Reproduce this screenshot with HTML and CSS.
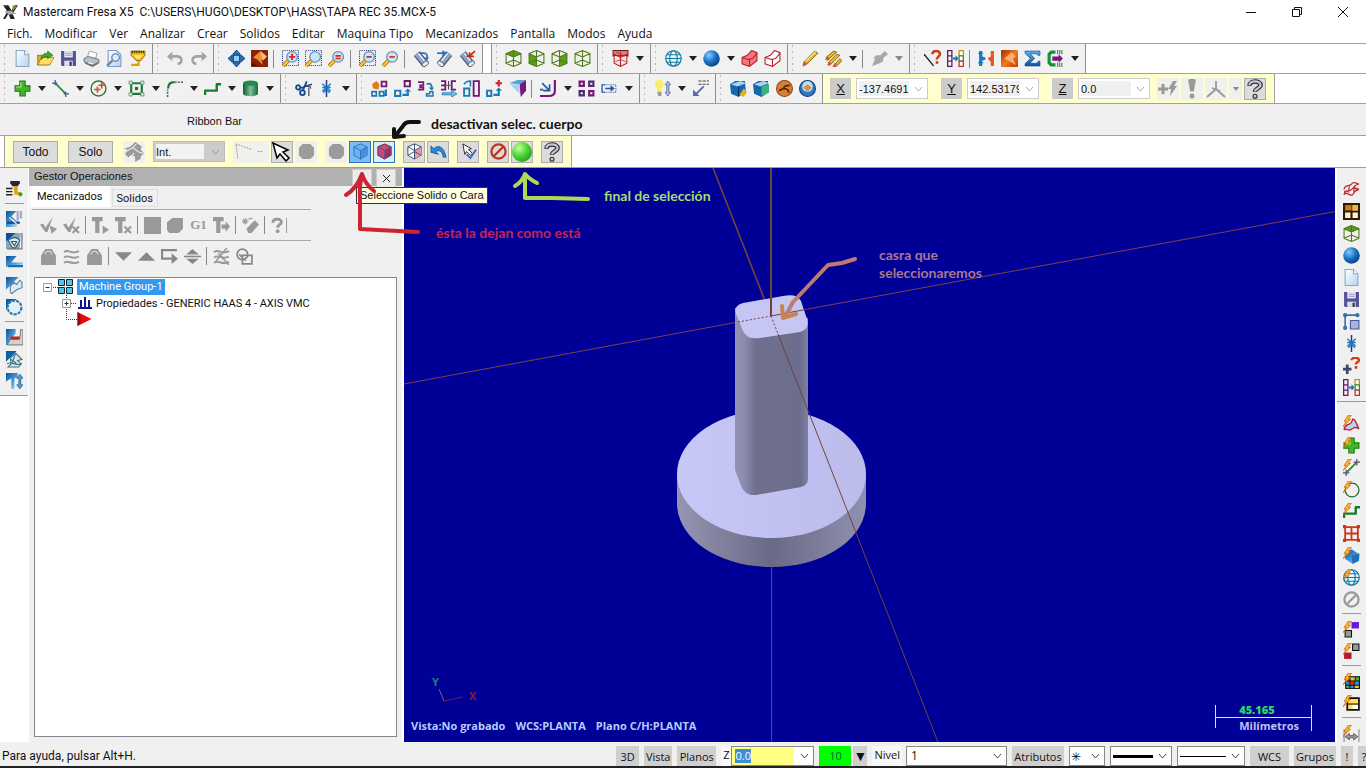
FILE: index.html
```html
<!DOCTYPE html>
<html lang="es">
<head>
<meta charset="utf-8">
<title>Mastercam Fresa X5</title>
<link rel="stylesheet" href="styles.css">
</head>
<body>
<svg class="sprite" aria-hidden="true">
<defs>
<linearGradient id="gBlue" x1="0" y1="0" x2="0" y2="1"><stop offset="0" stop-color="#5fb4ee"/><stop offset="1" stop-color="#0a55a8"/></linearGradient>
<linearGradient id="gPage" x1="0" y1="0" x2="1" y2="1"><stop offset="0" stop-color="#fff"/><stop offset="1" stop-color="#b4d2f2"/></linearGradient>
<radialGradient id="gBall" cx=".35" cy=".3" r=".8"><stop offset="0" stop-color="#8cc8f8"/><stop offset=".5" stop-color="#1b74c8"/><stop offset="1" stop-color="#08356f"/></radialGradient>
<radialGradient id="gGreen" cx=".35" cy=".3" r=".8"><stop offset="0" stop-color="#c8ff9c"/><stop offset=".5" stop-color="#4ed637"/><stop offset="1" stop-color="#1f9a1c"/></radialGradient>
<linearGradient id="gCyl"><stop offset="0" stop-color="#0a5a2c"/><stop offset=".5" stop-color="#7fc09a"/><stop offset="1" stop-color="#0d6c33"/></linearGradient>
<linearGradient id="gTile" x1="0" y1="0" x2="1" y2="1"><stop offset="0" stop-color="#0c4f96"/><stop offset=".6" stop-color="#4fa0d8"/><stop offset="1" stop-color="#cfe6f4"/></linearGradient>
<linearGradient id="gOrange" x1="0" y1="0" x2="1" y2="1"><stop offset="0" stop-color="#a02800"/><stop offset=".5" stop-color="#f07a20"/><stop offset="1" stop-color="#c63b00"/></linearGradient>
</defs>
<symbol id="logo" viewBox="0 0 16 16"><path d="M1 2h5l3 5 3-5h3l-5 8 2 5H8L6 10 3 15H1l4-7z" fill="#222"/><path d="M2 8l6-1 6 3-7 1z" fill="#aaa"/><path d="M10 2l4 1-4 5z" fill="#7b8a3a"/></symbol>
<symbol id="new" viewBox="0 0 16 16"><path d="M2 .5h8l4 4v11H2z" fill="url(#gPage)" stroke="#8aa4c4"/><path d="M10 .5v4h4" fill="#fff" stroke="#8aa4c4"/></symbol>
<symbol id="open" viewBox="0 0 16 16"><path d="M0 14V5h5l1 1h6v8z" fill="#e0a820" stroke="#8a6410" stroke-width=".7"/><path d="M1 14l3-7h12l-4 7z" fill="#ffe060" stroke="#a07810" stroke-width=".7"/><path d="M4 9c0-5 3-6 6-6V1l5 4-5 3V6C7 6 6 7 4 9z" fill="#3faa28" stroke="#1b6a10" stroke-width=".6"/></symbol>
<symbol id="save" viewBox="0 0 16 16"><path d="M1 1h14v14H2l-1-1z" fill="#54519a"/><path d="M4 1h8v6H4z" fill="#e8ecf8"/><path d="M5 3h6M5 5h6" stroke="#99a"/><path d="M4 10h8v5H4z" fill="#d8dcec"/><path d="M9 11h2v4H9z" fill="#333"/></symbol>
<symbol id="print" viewBox="0 0 16 16"><path d="M4 7l2-6 7 2-1 5z" fill="#fff" stroke="#888" stroke-width=".7"/><path d="M1 8l4-2 10 3v3l-5 3L1 11z" fill="#b9c2cc" stroke="#566" stroke-width=".8"/><path d="M2 11l7 3 5-3v2l-5 3-7-3z" fill="#6b7480"/><path d="M5 12l4 1" stroke="#fff"/></symbol>
<symbol id="preview" viewBox="0 0 16 16"><path d="M2 .5h8l4 4v11H2z" fill="url(#gPage)" stroke="#7a9ac0"/><circle cx="9" cy="7" r="3.5" fill="#d8ecff" stroke="#456a9a"/><path d="M6 10l-5 5" stroke="#6b88a8" stroke-width="2.2"/></symbol>
<symbol id="holder" viewBox="0 0 16 16"><path d="M2 1h13v4l-4 5H7L2 5z" fill="#f8c010" stroke="#6a4800" stroke-width=".7"/><path d="M3 2h12" stroke="#332800" stroke-dasharray="1 1" stroke-width="2"/><path d="M4 5l3 3h3l3-3z" fill="#ffe880"/><path d="M9 10v4H2" stroke="#e0a000" fill="none" stroke-width="2"/></symbol>
<symbol id="undo" viewBox="0 0 16 16"><path d="M3 6h6c6 0 6 7 1 7" fill="none" stroke="#a3a3a3" stroke-width="2.4"/><path d="M0 6l5-4.500v9z" fill="#a3a3a3"/></symbol>
<symbol id="redo" viewBox="0 0 16 16"><path d="M13 6H7c-6 0-6 7-1 7" fill="none" stroke="#a3a3a3" stroke-width="2.400"/><path d="M16 6l-5-4.500v9z" fill="#a3a3a3"/></symbol>
<symbol id="fit" viewBox="0 0 16 16"><path d="M8 0l3.500 4h-7zM8 16l3.500-4h-7zM0 8l4-3.500v7zM16 8l-4-3.500v7z" fill="#1a78d0" stroke="#083a78" stroke-width=".8"/><path d="M5 5h6v6H5z" fill="#8cd0ff" stroke="#083a78"/></symbol>
<symbol id="repaint" viewBox="0 0 16 16"><path d="M0 0h16v16H0z" fill="#8a2208"/><path d="M2 7l7-6 5 7-4 1 1 5-5-5z" fill="#f58a34"/><path d="M9 1l6 5-4 4z" fill="#ffc07a"/><path d="M1 12l5 3H1z" fill="#401000"/></symbol>
<symbol id="mag" viewBox="0 0 16 16"><path d="M6.500 9.500L1 15" stroke="#a86a00" stroke-width="3.500"/><path d="M6 10l-5 5" stroke="#ffc83a" stroke-width="2"/><circle cx="9.500" cy="6.500" r="5" fill="#c8e6fa" stroke="#6a8cae" stroke-width="1.200"/></symbol>
<symbol id="dots" viewBox="0 0 16 16"><path d="M.5.500h15v14H.5z" fill="none" stroke="#2a3f8c" stroke-dasharray="1 1"/></symbol>
<symbol id="zwin" viewBox="0 0 16 16"><use href="#dots"/><use href="#mag"/><path d="M9.500 3.500v6M6.500 6.500h6" stroke="#e02818" stroke-width="1.800"/></symbol>
<symbol id="ztar" viewBox="0 0 16 16"><use href="#dots"/><use href="#mag"/></symbol>
<symbol id="zin" viewBox="0 0 16 16"><use href="#mag"/><path d="M7 5.500h5M7 8h5" stroke="#d02818" stroke-width="1.600"/></symbol>
<symbol id="zprev" viewBox="0 0 16 16"><use href="#dots"/><use href="#mag"/><path d="M7 6.500h5" stroke="#c03020" stroke-width="1.600"/></symbol>
<symbol id="zout" viewBox="0 0 16 16"><use href="#mag"/><path d="M7 6.500h5" stroke="#e02818" stroke-width="1.600"/></symbol>
<symbol id="tube" viewBox="0 0 16 16"><path d="M3.500 3.500l7.500 9" stroke="#3d4d6a" stroke-width="7"/><path d="M3.500 3.500l7.500 9" stroke="#8fa3c4" stroke-width="5"/><path d="M5 3l7 9" stroke="#dbe6f4" stroke-width="1.500"/><ellipse cx="11.500" cy="13" rx="3.500" ry="2" transform="rotate(-38 11.500 13)" fill="#e8eef6" stroke="#3d4d6a" stroke-width=".8"/></symbol>
<symbol id="dyn" viewBox="0 0 16 16"><use href="#tube"/><path d="M6 3h4c3 0 4 2 3 5" fill="none" stroke="#2a6fc0" stroke-width="1.600"/><path d="M11 7h4l-2 3z" fill="#2a6fc0"/></symbol>
<symbol id="dyn2" viewBox="0 0 16 16"><use href="#tube" transform="matrix(-1 0 0 1 16 0)"/><path d="M1 3h7" stroke="#2a6fc0" stroke-width="1.600"/><path d="M6 0l4 3-4 3z" fill="#2a6fc0"/></symbol>
<symbol id="dyn3" viewBox="0 0 16 16"><use href="#tube"/><path d="M7 6c3 0 5-2 8-5M10 2v4h4" fill="none" stroke="#d02818" stroke-width="1.600"/></symbol>
<symbol id="cube" viewBox="0 0 16 16"><path d="M8 .5l7 3v9l-7 3-7-3v-9zM1 3.500l7 3 7-3M8 6.500v9M8 .5v7M1 12.500l7-3 7 3" fill="none" stroke="currentColor"/></symbol>
<symbol id="ctop" viewBox="0 0 16 16"><path d="M8 .5l7 3-7 3-7-3z" fill="#5f9c1c"/><use href="#cube"/></symbol>
<symbol id="cfront" viewBox="0 0 16 16"><path d="M1 3.500l7 3v9l-7-3z" fill="#5f9c1c"/><use href="#cube"/></symbol>
<symbol id="cright" viewBox="0 0 16 16"><path d="M15 3.500l-7 3v9l7-3z" fill="#5f9c1c"/><use href="#cube"/></symbol>
<symbol id="cplane" viewBox="0 0 16 16"><path d="M1 .5h14v5H1z" fill="#e87878" stroke="#602020"/><path d="M2 4l6 3 6-3v8.500l-6 3-6-3zM8 7v8" fill="#fce4e4" stroke="#b02028"/><path d="M8 1v6M4 2l8 4M3 11l5-2 5 2" fill="none" stroke="#b02028" stroke-width=".7"/></symbol>
<symbol id="globe" viewBox="0 0 16 16"><g fill="none" stroke="#1878a0" stroke-width="1.100"><circle cx="8" cy="8" r="7.300" fill="#e4f4fa"/><ellipse cx="8" cy="8" rx="3.500" ry="7.300"/><path d="M.7 8h14.600M2 4.500h12M2 11.500h12"/></g></symbol>
<symbol id="ball" viewBox="0 0 16 16"><circle cx="8" cy="8" r="7.800" fill="url(#gBall)"/></symbol>
<symbol id="block" viewBox="0 0 16 16"><path d="M1 7l5-2 4-4.500 5 2V10l-7 5.500-7-2.500z" fill="var(--f,#f4787c)" stroke="#b81c24"/><path d="M1 7l6 2 4-1 4-5M8 9v6" fill="none" stroke="#b81c24"/></symbol>
<symbol id="pencil" viewBox="0 0 16 16"><path d="M1 15l1-4L12 1l3 2L5 13z" fill="#e8b820" stroke="#7a5a08" stroke-width=".8"/><path d="M1 15l1-4 3 2z" fill="#e05038"/><path d="M3.500 10.500L13 1.500" stroke="#fff09a"/></symbol>
<symbol id="pencils" viewBox="0 0 16 16"><path d="M1 7l7-6 3 1-8 7zM3 12l8-8 3 1-9 9zM8 15l6-7 2 2-6 6z" fill="#e8b820" stroke="#7a5a08" stroke-width=".8"/><path d="M0 9l2-3 3 2-2 2zM2 14l2-3 2 2-2 2zM7 16l2-4 2 2-2 2z" fill="#e05038"/></symbol>
<symbol id="gbrush" viewBox="0 0 16 16"><path d="M1 15l3-7H2l3-3h4l4-4 3 3-4 3-1 4-4 2z" fill="#a8a8a8"/></symbol>
<symbol id="ask" viewBox="0 0 16 16"><path d="M0 4l9 11" stroke="#222" stroke-width="1.300"/><path d="M8 4c0-4 7-4 7 0 0 2-3 2.500-3 5" fill="none" stroke="#d03c10" stroke-width="2.400"/><path d="M11 10.500h2.500v2.500H11z" fill="#d03c10"/></symbol>
<symbol id="match" viewBox="0 0 16 16"><path d="M.6.600h4v14.800h-4zM.6 5.500h4M.6 10.500h4" fill="none" stroke="#68186a" stroke-width="1.200"/><path d="M11.400.600h4v5h-4z" fill="#fff" stroke="#d09010" stroke-width="1.200"/><path d="M11.400 5.500h4v5h-4z" fill="#fff" stroke="#38902c" stroke-width="1.200"/><path d="M11.400 10.500h4v5h-4z" fill="#fff" stroke="#c0302c" stroke-width="1.200"/><path d="M5.500 8h3" stroke="#1878c8" stroke-width="2"/><path d="M8 5l3 3-3 3z" fill="#1878c8"/></symbol>
<symbol id="merge" viewBox="0 0 16 16"><path d="M1 1h3v5l3 1v2l-3 1v5H1z" fill="#1878c8"/><path d="M15 1h-3v5L9 8l3 3v4h3z" fill="#e85420"/><path d="M0 3h5M0 12h5" stroke="#1878c8"/></symbol>
<symbol id="osq" viewBox="0 0 16 16"><rect width="16" height="16" rx="1" fill="url(#gOrange)"/><path d="M3 8l7-6 4 4-3 2 3 6-5-3z" fill="#ffb070"/></symbol>
<symbol id="sigma" viewBox="0 0 16 16"><path d="M1 1h14v4h-2L12 3.500H6L10 8l-4.500 4.500H12l1.500-2H15V15H1v-2l5-5-5-5z" fill="url(#gBlue)" stroke="#0a4484" stroke-width=".6"/></symbol>
<symbol id="cgreen" viewBox="0 0 16 16"><path d="M8 2H4L2 4v8l2 2h4" fill="none" stroke="#16923a" stroke-width="3"/><path d="M10 0v4M12 0v4M14 0v4M10 12v4M12 12v4M14 12v4" stroke="#16923a"/><path d="M5 6h6V4l4 4-4 4v-2H5z" fill="#781878"/></symbol>
<symbol id="plus" viewBox="0 0 16 16"><path d="M5.500 1h5v4.500H15v5h-4.500V15h-5v-4.500H1v-5h4.500z" fill="#44b428" stroke="#1b7a12"/><path d="M6.500 2v4.500H2" stroke="#b0ee90" fill="none"/></symbol>
<symbol id="line" viewBox="0 0 16 16"><path d="M3 3l10 10" stroke="#1f8c34" stroke-width="1.500"/><path d="M0 3h5M3 0v5M11 13h5M13 11v5" stroke="#5050a0" stroke-width="1.200"/></symbol>
<symbol id="circ" viewBox="0 0 16 16"><circle cx="8" cy="8" r="7" fill="none" stroke="#2a7a30" stroke-width="1.300"/><path d="M7 6v6M4 9h6M11 2v6M8 5h6" stroke="#e04820" stroke-width="1.500"/></symbol>
<symbol id="rect" viewBox="0 0 16 16"><path d="M3 3h10v10H3z" fill="none" stroke="#187a30" stroke-width="2"/><path d="M1 1h3v3H1zM12 1h3v3h-3zM1 12h3v3H1zM12 12h3v3h-3z" fill="#e4f0e4" stroke="#5c8c68" stroke-width=".8"/><path d="M6.500 6.500h3v3h-3z" fill="#187a30"/></symbol>
<symbol id="fillet" viewBox="0 0 16 16"><path d="M1.500 16V9" stroke="#4858a0" stroke-width="1.500" stroke-dasharray="2 1"/><path d="M2 8c0-4 2-6 6-6" stroke="#187a30" fill="none" stroke-width="2"/><path d="M8 2h8" stroke="#4a4a4a" stroke-width="1.300" stroke-dasharray="2 1"/></symbol>
<symbol id="spline" viewBox="0 0 16 16"><path d="M1 14v-4h11V4h4" stroke="#187a30" stroke-linejoin="round" fill="none" stroke-width="2.200"/></symbol>
<symbol id="cyl" viewBox="0 0 16 16"><path d="M1 3v10c0 3 14 3 14 0V3z" fill="url(#gCyl)"/><ellipse cx="8" cy="3" rx="7" ry="2.500" fill="#1c8c48"/></symbol>
<symbol id="trim" viewBox="0 0 16 16"><path d="M8 9l3-8M9 6h5l1 2M13 7v8" stroke="#667" fill="none" stroke-width="1.400"/><circle cx="3" cy="7" r="2" fill="none" stroke="#144c90" stroke-width="1.800"/><circle cx="7" cy="12" r="2.200" fill="none" stroke="#144c90" stroke-width="1.800"/><path d="M4 8l12-4M7 10l4-8" stroke="#144c90" stroke-width="1.500"/></symbol>
<symbol id="star" viewBox="0 0 16 16"><path d="M8 0v16" stroke="#223a88" stroke-width="1.400"/><path d="M4 3.500l8 7M12 3.500l-8 7M4 7h8M5 12l3-3 3 3" fill="none" stroke="#1878c0" stroke-width="1.300"/></symbol>
<symbol id="x1" viewBox="0 0 16 16"><path d="M1 11h4v4H1zM8 11h4v4H8z" fill="none" stroke="#1878b8" stroke-width="1.600"/><path d="M10 1.500h4.500V6H10z" fill="none" stroke="#701870" stroke-width="1.700"/><path d="M1 4l4-3 3 3-1 5-5-1z" fill="#e87820"/><path d="M12 14h2V9" stroke="#1878b8" stroke-width="2" fill="none"/></symbol>
<symbol id="x2" viewBox="0 0 16 16"><path d="M1 10h5v5H1z" fill="none" stroke="#1878b8" stroke-width="1.800"/><path d="M10 1h5v5h-5z" fill="none" stroke="#701870" stroke-width="1.800"/><path d="M8 14h5v-3" fill="none" stroke="#1878b8" stroke-width="2"/><path d="M10 11l3-3 3 3z" fill="#1878b8"/></symbol>
<symbol id="x3" viewBox="0 0 16 16"><path d="M1 2h5v3H3v2h3v2H1" fill="none" stroke="#701870" stroke-width="1.600"/><path d="M9 4c4-2 5 1 5 4" fill="none" stroke="#1878b8" stroke-width="1.600"/><path d="M9 15h6v-4h-3v2H9z" fill="none" stroke="#1878b8" stroke-width="1.400"/><path d="M11 7h5l-2 3z" fill="#1878b8"/></symbol>
<symbol id="x4" viewBox="0 0 16 16"><path d="M1 1h4v8H1M1 5h4M15 1h-4v8h4" fill="none" stroke="#701870" stroke-width="1.700"/><path d="M8 1v8M6 5h4" stroke="#445" stroke-width="1"/><path d="M2 12h9v-2l5 3-5 3v-2H2z" fill="#78b8e4" stroke="#1878b8" stroke-width=".7"/></symbol>
<symbol id="x5" viewBox="0 0 16 16"><path d="M10 1h5v14h-5z" fill="none" stroke="#701870" stroke-width="1.700"/><path d="M1 8h5v7H1z" fill="none" stroke="#1878b8" stroke-width="1.700"/><path d="M1 4c2-3 4-3 6-3v5" fill="none" stroke="#1878b8" stroke-width="1.500"/></symbol>
<symbol id="x6" viewBox="0 0 16 16"><path d="M1 10h4v5H1z" fill="none" stroke="#1878b8" stroke-width="1.800"/><path d="M12 0v6M9 3h6" stroke="#d02020" stroke-width="2"/><path d="M7 14h5V9" fill="none" stroke="#1878b8" stroke-width="2"/><path d="M9 10l3-3 3 3z" fill="#1878b8"/></symbol>
<symbol id="x7" viewBox="0 0 16 16"><path d="M0 3l8-3h8l-6 4z" fill="#5aa0dc"/><path d="M10 4l6-4v10l-5 6z" fill="#781878"/><path d="M1 4h9v9z" fill="#a8cef0"/></symbol>
<symbol id="off" viewBox="0 0 16 16"><path d="M14 0v10c0 4-3 5-6 5H0" fill="none" stroke="#781878" stroke-width="2"/><path d="M0 9h3M2 3l6 6M9 4v6H3" fill="none" stroke="#2858a0" stroke-width="1.600"/></symbol>
<symbol id="grid4" viewBox="0 0 16 16"><path d="M1.500 1.500h4v4h-4zM10.500 10.500h4v4h-4z" fill="none" stroke="#781878" stroke-width="2"/><path d="M10.500 1.500h4v4h-4zM1.500 10.500h4v4h-4z" fill="none" stroke="#502878" stroke-width="2"/></symbol>
<symbol id="stretch" viewBox="0 0 16 16"><path d="M1 4.500h13v7H1z" fill="none" stroke="#2858a0" stroke-dasharray="1 1"/><path d="M4 4.500H1v7h3" fill="none" stroke="#2858a0"/><path d="M4 8h7" stroke="#2858a0" stroke-width="1.500"/><path d="M9 5l4 3-4 3z" fill="#2858a0"/></symbol>
<symbol id="bulb" viewBox="0 0 16 16"><path d="M5 0c5 0 5 6 2 8v3H3V8C0 6 0 0 5 0z" fill="#f8f060"/><path d="M3 11h4v4H4z" fill="#999"/><path d="M13 1l2.500 3.500H14v7h1.500L13 15l-2.500-3.500H12v-7h-1.500z" fill="#b8c0e0" stroke="#505890" stroke-width=".7"/></symbol>
<symbol id="note" viewBox="0 0 16 16"><path d="M6 1h10M6 4h10" stroke="#444" stroke-dasharray="3 1"/><path d="M11 6l-7 7" stroke="#5868a8" stroke-width="1.800"/><path d="M1 15V9l6 6z" fill="#5868a8"/></symbol>
<symbol id="bx1" viewBox="0 0 16 16"><path d="M0 4l5-3h9l1 10-7 5-7-3z" fill="#1468b0"/><path d="M1 4l6 2 8-3-5-2z" fill="#a8d4f4"/><path d="M8 6v9" stroke="#082c58"/><path d="M9 14l4-6 3 3-3 5z" fill="#e8b020"/></symbol>
<symbol id="bx2" viewBox="0 0 16 16"><path d="M0 4l5-3h9l1 10-7 5-7-3z" fill="#1468b0"/><path d="M1 4l6 2 8-3-5-2z" fill="#a8d4f4"/><path d="M8 6l7-2v8l-7 3z" fill="#3cb47c"/></symbol>
<symbol id="rnd1" viewBox="0 0 16 16"><circle cx="8" cy="8" r="7.500" fill="#d88030" stroke="#884818"/><path d="M3 10l4-2c1-3 3-3 6-3M12 12c0-3-2-4-5-4" fill="none" stroke="#4a2408" stroke-width="1.600"/></symbol>
<symbol id="rnd2" viewBox="0 0 16 16"><circle cx="8" cy="8" r="7.500" fill="#2c78c8" stroke="#183c78"/><circle cx="8" cy="6" r="5" fill="#c4dcf0"/><path d="M4 7l4-3 4 3-4 4z" fill="#d89048"/></symbol>
<symbol id="fast" viewBox="0 0 20 16"><path d="M5 3v10M0 8h10" stroke="#999" stroke-width="3"/><path d="M15 0h4l-3 5h3l-7 10 1-7h-3z" fill="#999"/></symbol>
<symbol id="bang" viewBox="0 0 16 16"><path d="M5 1c1-2 5-2 6 0l-1.500 9h-3z" fill="#999"/><circle cx="8" cy="13.500" r="2" fill="#999"/></symbol>
<symbol id="axes" viewBox="0 0 20 16"><path d="M10 0v8M10 8l-9 8M10 8l9 8M6 7l8 3" stroke="#999" stroke-width="1.800" fill="none"/></symbol>
<symbol id="help" viewBox="0 0 18 18"><path d="M4 6C4 1 14 1 14 5.500c0 3-5 3-5 6" fill="none" stroke="#2c2c34" stroke-width="4"/><path d="M4 5.500C4 1 14 1 14 5.500c0 3-5 3-5 5.500" fill="none" stroke="#c4c8d4" stroke-width="2"/><circle cx="9" cy="15.500" r="1.800" fill="#c4c8d4" stroke="#2c2c34"/></symbol>
<symbol id="gcubes" viewBox="0 0 18 18"><path d="M0 6l6-2 4-4 6 4-1 3 3 3-3 3v2l-5 3 0-5-4-1-2 2-3-3 2-4z" fill="#9a9a9a"/><path d="M1 9l7-4 5 4 4 1M5 15l4-5M11 2l-4 4" stroke="#eee" fill="none"/></symbol>
<symbol id="cursor" viewBox="0 0 20 20"><path d="M1 1l4 15 3-4 6 7 3-3-6-6 5-2z" fill="#fff" stroke="#000" stroke-width="1.500"/></symbol>
<symbol id="ghex" viewBox="0 0 18 18"><path d="M5 1h8l4 4v8l-4 4H5l-4-4V5z" fill="#9c9c9c"/></symbol>
<symbol id="bcube" viewBox="0 0 18 18"><path d="M9 1l7 3v9l-7 4-7-4V4z" fill="#6ab4f4" stroke="#2a70c0"/><path d="M9 8l7-4v9l-7 4z" fill="#4490dc"/><path d="M2 4l7 4 7-4M9 8v9" fill="none" stroke="#2a70c0"/></symbol>
<symbol id="rcube" viewBox="0 0 18 18"><path d="M9 1l7 3v9l-7 4-7-4V4z" fill="#c84878" stroke="#44304c"/><path d="M9 8l7-4v9l-7 4z" fill="#983058"/><path d="M2 4l7 4 7-4M9 8v9" fill="none" stroke="#7a4a8c"/></symbol>
<symbol id="wcube" viewBox="0 0 18 18"><path d="M9 1l7 3v9l-7 4-7-4V4z" fill="#fff" stroke="#3a4a70"/><path d="M9 8l7-4v9l-7 4z" fill="#e898a8"/><path d="M2 4l7 4 7-4M9 1v16M2 13l7-4 7 4" fill="none" stroke="#3a4a70"/></symbol>
<symbol id="prev" viewBox="0 0 18 18"><path d="M1 10V3l3 3c5-5 11-2 13 9l-3 0c-1-6-4-8-8-6l3 3z" fill="#2888d8" stroke="#104888" stroke-width=".7"/></symbol>
<symbol id="vcheck" viewBox="0 0 18 18"><path d="M3 1l2 11 2-3 4 4 2-2-4-4 3-1z" fill="#fff" stroke="#222"/><path d="M7 12l4 4 6-9" fill="none" stroke="#4868c0" stroke-width="2"/></symbol>
<symbol id="stop" viewBox="0 0 18 18"><circle cx="9" cy="9" r="7.500" fill="none" stroke="currentColor" stroke-width="2.400"/><path d="M4 14L14 4" stroke="currentColor" stroke-width="2.400"/></symbol>
<symbol id="ok" viewBox="0 0 18 18"><circle cx="9" cy="9" r="9" fill="url(#gGreen)"/></symbol>
<symbol id="vert" viewBox="0 0 34 18"><path d="M3 16L1 1l17 6M24 9h6" fill="none" stroke="#999" stroke-dasharray="2 1"/></symbol>
<symbol id="mill" viewBox="0 0 16 16"><path d="M4 0h9v2l-2 3H6L4 2z" fill="#2a2438"/><path d="M7 5h4v5l3 1v2H8z" fill="#e8a010"/><path d="M0 7h6M0 10h6M0 13h6" stroke="#222" stroke-width="1.400"/><circle cx="13.500" cy="12.500" r="2" fill="#4a9c20"/></symbol>
<symbol id="m1" viewBox="0 0 16 16"><path d="M0 0h10L5 5l6 5-1 5H0z" fill="url(#gTile)"/><path d="M10 0h2v9h-2zM13 0h2v7h-2z" fill="#a8a0cc"/><path d="M1 11h12" stroke="#0a4480" stroke-width="2"/><path d="M3 6l7 6" stroke="#fff"/></symbol>
<symbol id="m2" viewBox="0 0 16 16"><path d="M0 0h13v15H0z" fill="#86a8bc"/><path d="M0 0h9L0 8z" fill="#0c4f96"/><path d="M2 7c4-4 9-3 11 0l-4 7H6zM5 8h5l-2 4z" fill="#dce8ee" stroke="#385870"/><path d="M13 0h3v6l-2 1z" fill="#a0a0b8"/><path d="M1 15h14V6" stroke="#667" fill="none"/></symbol>
<symbol id="m3" viewBox="0 0 16 16"><path d="M0 1h10L5 7h11v4H0z" fill="url(#gTile)"/><path d="M2 10.500h14" stroke="#1c69a8" stroke-width="2"/></symbol>
<symbol id="m4" viewBox="0 0 16 16"><path d="M0 0h12L0 12z" fill="url(#gTile)"/><path d="M4 9l3-4 3 2 3-4 2 2v5l-5 2-5 4-1-3z" fill="#dceaf4" stroke="#5080a8"/></symbol>
<symbol id="m5" viewBox="0 0 16 16"><path d="M0 0h10L0 10z" fill="#0c5fa6"/><circle cx="8" cy="8" r="6.500" fill="#e4f0f8" stroke="#2c78b0" stroke-width="2" stroke-dasharray="3 1"/></symbol>
<symbol id="m6" viewBox="0 0 16 16"><path d="M0 0h9v4L3 12v3H0z" fill="url(#gTile)"/><path d="M5 8h8l1-8 2 1v14H1z" fill="#cfd0d4" stroke="#666" stroke-width=".8"/><path d="M5 7h8v3H4z" fill="#c82018"/></symbol>
<symbol id="m7" viewBox="0 0 16 16"><path d="M0 0h10L0 10z" fill="#0c5fa6"/><path d="M4 7l5-5 6 6-4 1 3 3-2 3H2l3-3z" fill="#d8e4ea" stroke="#3c7080"/><path d="M1 12c4-3 9 3 14 0M5 8l5 4M9 2l-3 9" fill="none" stroke="#3c7080"/></symbol>
<symbol id="m8" viewBox="0 0 16 16"><path d="M0 0h11v4L8 5v10H5V5L0 8z" fill="url(#gTile)"/><path d="M13 1l3 4h-2v6h2l-3 4-3-4h2V5h-2z" fill="#48a0d0" stroke="#1c5c90" stroke-width=".6"/></symbol>
<symbol id="r1" viewBox="0 0 16 16"><path d="M1 8c1-6 5-2 7-5s4-1 7 0c-4 0-4 3-6 4M1 13c1-6 5-2 7-5s4-1 7 0c-4 0-4 3-6 5S3 9 1 13M1 10l4-1M6 5l-1 6M11 4l-1 6" fill="none" stroke="#c02c34" stroke-width="1.200"/></symbol>
<symbol id="r2" viewBox="0 0 16 16"><path d="M0 0h16v16H0z" fill="#2a1c08"/><path d="M9 2h5v5H9zM9 9h5v5H9zM2 9h5v5H2z" fill="#fff4c0"/><path d="M2 2h6v5H2z" fill="#d87810"/><path d="M9 2h5v5H9z" fill="#f0b830"/></symbol>
<symbol id="r3" viewBox="0 0 16 16"><path d="M2 2h11M2 2v12" stroke="#3870a8" stroke-width="1.500" fill="none"/><circle cx="2" cy="2" r="2" fill="#3870a8"/><circle cx="13.500" cy="2" r="2" fill="#3870a8"/><circle cx="2" cy="14" r="2" fill="#3870a8"/><path d="M7 7h8v8H7z" fill="#a8b4d8" stroke="#4858a0"/></symbol>
<symbol id="r4" viewBox="0 0 16 16"><path d="M4 7v9M0 11.500h8" stroke="#446" stroke-width="2.600"/><path d="M8 3c0-3 7-3 7 0 0 2-3 2-3 4" fill="none" stroke="#d03c10" stroke-width="2.200"/><path d="M11 8.500h2.500V11H11z" fill="#d03c10"/></symbol>
<symbol id="bolt" viewBox="0 0 16 16"><path d="M5 0L1 6h2L0 11l7-7H5l3-4z" fill="#ffb820" stroke="#c85010" stroke-width=".6"/></symbol>
<symbol id="q1" viewBox="0 0 16 16"><path d="M1 14c1-8 7-2 8-10 3-1 3 4 6 9-4-3-6 0-8 1s-4-2-6 0" fill="#b8d4ec" stroke="#c02c34" stroke-width="1.400"/><use href="#bolt"/></symbol>
<symbol id="q2" viewBox="0 0 16 16"><use href="#plus"/><use href="#bolt"/></symbol>
<symbol id="q3" viewBox="0 0 16 16"><path d="M3 13L13 3" stroke="#1f8c34" stroke-width="1.600"/><path d="M0 13h6M3 10v6M10 3h6M13 0v6" stroke="#556" stroke-width="1.200"/><use href="#bolt"/></symbol>
<symbol id="q4" viewBox="0 0 16 16"><circle cx="8.500" cy="8.500" r="6.500" fill="none" stroke="#226c2c" stroke-width="1.200"/><use href="#bolt"/></symbol>
<symbol id="q5" viewBox="0 0 16 16"><use href="#spline"/><use href="#bolt"/></symbol>
<symbol id="q6" viewBox="0 0 16 16"><path d="M2 2h12v12H2zM8 2v12M2 8h12" fill="none" stroke="#c8381c" stroke-width="1.700"/><path d="M0 0h3v3H0zM13 0h3v3h-3zM0 13h3v3H0zM13 13h3v3h-3z" fill="#c8381c"/></symbol>
<symbol id="q7" viewBox="0 0 16 16"><path d="M2 6l6-4 8 5-1 6-6 3-7-5z" fill="url(#gTile)"/><path d="M8 8l7-2v7l-6 3z" fill="#1c70bc"/><use href="#bolt"/></symbol>
<symbol id="q8" viewBox="0 0 16 16"><use href="#globe"/><use href="#bolt"/></symbol>
<symbol id="s1" viewBox="0 0 16 16"><path d="M8 1h7v6H8z" fill="#6a18d8"/><path d="M2 9h6v6H2z" fill="#999" stroke="#111"/><use href="#bolt"/></symbol>
<symbol id="s2" viewBox="0 0 16 16"><path d="M9 1h6v6H9z" fill="#999" stroke="#111"/><path d="M1 9h7v6H1z" fill="#b81830"/><use href="#bolt"/></symbol>
<symbol id="s3" viewBox="0 0 16 16"><path d="M2 3h14v12H2z" fill="#111"/><path d="M3 4h3v3H3zM7 8h3v3H7z" fill="#e03020"/><path d="M7 4h4v3H7zM11 12h4v2h-4z" fill="#f0c020"/><path d="M12 4h3v3h-3zM3 12h3v2H3z" fill="#38b848"/><path d="M3 8h3v3H3zM11 8h4v3h-4zM7 12h3v2H7z" fill="#3088e0"/><use href="#bolt"/></symbol>
<symbol id="s4" viewBox="0 0 16 16"><path d="M4 3h11v11H4z" fill="#ffe060" stroke="#111" stroke-width="1.600"/><path d="M9 9h5v4H9z" fill="#fff"/><path d="M4 8.500h11" stroke="#111"/><use href="#bolt"/></symbol>
<symbol id="s5" viewBox="0 0 16 16"><path d="M1 4v12M15 4v12" stroke="#888"/><path d="M2 11l4-3v2h4V8l4 3-4 3v-2H6v2z" fill="#999" stroke="#444" stroke-width=".7"/><use href="#bolt"/></symbol>
<symbol id="ck1" viewBox="0 0 16 16"><path d="M0 7l3-1 2 4 7-10-5 14H5zM9 8l7 3-5 5z" fill="#999"/></symbol>
<symbol id="ck2" viewBox="0 0 16 16"><path d="M0 7l3-1 2 4 7-10-5 14H5z" fill="#999"/><path d="M9 9l6 6M15 9l-6 6" stroke="#999" stroke-width="2"/></symbol>
<symbol id="t1" viewBox="0 0 16 16"><path d="M0 0h10v4H7v11H3V4H0zM10 8l6 4-6 4z" fill="#999"/></symbol>
<symbol id="t2" viewBox="0 0 16 16"><path d="M0 0h10v4H7v11H3V4H0z" fill="#999"/><path d="M9 9l6 6M15 9l-6 6" stroke="#999" stroke-width="2"/></symbol>
<symbol id="gsq" viewBox="0 0 16 16"><path d="M0 0h16v16H0z" fill="#999"/></symbol>
<symbol id="gpoly" viewBox="0 0 16 16"><path d="M5 1h10v10l-4 4H2l-2-3V5z" fill="#999"/></symbol>
<symbol id="tarr" viewBox="0 0 16 16"><path d="M0 0h10v4H7v11H3V4H0zM8 7h4V4l4 5-4 5v-3H8z" fill="#999"/></symbol>
<symbol id="wand" viewBox="0 0 16 16"><path d="M4 11l8-8 4 4-7 8-3 0z" fill="#999"/><path d="M3 1v6M0 4h6M1 2l4 4M5 2L1 6M6 2l4-1" stroke="#999"/></symbol>
<symbol id="ghelp" viewBox="0 0 18 16"><path d="M2 5C2 0 11 0 11 4.500c0 3-4 2-4 6" fill="none" stroke="#999" stroke-width="3"/><circle cx="7" cy="14" r="2" fill="#999"/><path d="M16.500 0v16" stroke="#999"/></symbol>
<symbol id="lock" viewBox="0 0 16 16"><path d="M1 7l4-6h6l4 6v9H1z" fill="#999"/><path d="M5 6c0-4 6-4 6 0" stroke="#ddd" fill="none"/></symbol>
<symbol id="waves" viewBox="0 0 16 16"><path d="M1 4c4-4 7 3 14-1M1 9c4-4 7 3 14-1M1 14c4-4 7 3 14-1" stroke="#999" stroke-width="1.800" fill="none"/></symbol>
<symbol id="dn" viewBox="0 0 16 16"><path d="M0 4h16l-8 8z" fill="#888"/></symbol>
<symbol id="up" viewBox="0 0 16 16"><path d="M0 12h16L8 4z" fill="#888"/></symbol>
<symbol id="loop" viewBox="0 0 16 16"><path d="M15 2H1v8h11" stroke="#888" stroke-width="2" fill="none"/><path d="M10 5l6 5-6 5z" fill="#888"/></symbol>
<symbol id="ud" viewBox="0 0 16 16"><path d="M8 1l6 5H2zM8 15l6-5H2z" fill="#888"/><path d="M0 8h16" stroke="#888" stroke-width="1.500"/></symbol>
<symbol id="wavex" viewBox="0 0 16 16"><use href="#waves"/><path d="M13 0L3 12M5 5l10 11" stroke="#999" stroke-width="1.500"/></symbol>
<symbol id="shapes" viewBox="0 0 16 16"><circle cx="6" cy="6" r="5" fill="none" stroke="#888" stroke-width="1.600"/><path d="M6 7h9v8H6zM3 6l6 6" fill="none" stroke="#888" stroke-width="1.600"/></symbol>
</svg>

<header class="titlebar">
<svg class="ic"><use href="#logo"/></svg>
<h1>Mastercam Fresa X5&nbsp; C:\USERS\HUGO\DESKTOP\HASS\TAPA REC 35.MCX-5</h1>
<div class="winbtns">
<button aria-label="Minimizar"><svg viewBox="0 0 12 12"><path d="M1 6.500h10"/></svg></button>
<button aria-label="Restaurar"><svg viewBox="0 0 12 12"><path d="M1.500 3.500h7v7h-7zM3.500 3.500v-2h7v7h-2"/></svg></button>
<button aria-label="Cerrar"><svg viewBox="0 0 12 12"><path d="M1 1l10 10M11 1L1 11"/></svg></button>
</div>
</header>

<nav class="menubar" aria-label="Menú">
<button>Fich.</button><button>Modificar</button><button>Ver</button><button>Analizar</button><button>Crear</button><button>Solidos</button><button>Editar</button><button>Maquina Tipo</button><button>Mecanizados</button><button>Pantalla</button><button>Modos</button><button>Ayuda</button>
</nav>

<div class="row">
<div class="bar"><button aria-label="Nuevo"><svg class="ic"><use href="#new"/></svg></button><button aria-label="Abrir"><svg class="ic"><use href="#open"/></svg></button><button aria-label="Guardar"><svg class="ic"><use href="#save"/></svg></button><button aria-label="Imprimir"><svg class="ic"><use href="#print"/></svg></button><button aria-label="Vista previa"><svg class="ic"><use href="#preview"/></svg></button><button aria-label="Herramienta"><svg class="ic"><use href="#holder"/></svg></button></div>
<div class="bar"><button aria-label="Deshacer"><svg class="ic"><use href="#undo"/></svg></button><button aria-label="Rehacer"><svg class="ic"><use href="#redo"/></svg></button></div>
<div class="bar"><button aria-label="Ajustar"><svg class="ic"><use href="#fit"/></svg></button><button aria-label="Redibujar"><svg class="ic"><use href="#repaint"/></svg></button><i class="sep"></i><button aria-label="Zoom ventana"><svg class="ic"><use href="#zwin"/></svg></button><button aria-label="Zoom objetivo"><svg class="ic"><use href="#ztar"/></svg></button><button aria-label="Zoom selección"><svg class="ic"><use href="#zin"/></svg></button><i class="sep"></i><button aria-label="Zoom previo"><svg class="ic"><use href="#zprev"/></svg></button><button aria-label="Alejar"><svg class="ic"><use href="#zout"/></svg></button><i class="sep"></i><button aria-label="Rotación dinámica"><svg class="ic"><use href="#dyn"/></svg></button><button aria-label="Rotar vista"><svg class="ic"><use href="#dyn2"/></svg></button><button aria-label="Vista previa anterior"><svg class="ic"><use href="#dyn3"/></svg></button></div>
<div class="bar apart green"><button aria-label="Planta"><svg class="ic"><use href="#ctop"/></svg></button><button aria-label="Frontal"><svg class="ic"><use href="#cfront"/></svg></button><button aria-label="Derecha"><svg class="ic"><use href="#cright"/></svg></button><button aria-label="Isométrica"><svg class="ic"><use href="#cube"/></svg></button></div>
<div class="bar"><button aria-label="Planos"><svg class="ic"><use href="#cplane"/></svg></button><button class="dd" aria-label="Más planos"></button></div>
<div class="bar"><button aria-label="Alambre"><svg class="ic"><use href="#globe"/></svg></button><button class="dd" aria-label="Más alambre"></button><button aria-label="Sombreado"><svg class="ic"><use href="#ball"/></svg></button><button class="dd" aria-label="Más sombreado"></button><button aria-label="Translúcido"><svg class="ic"><use href="#block"/></svg></button><button class="clear" aria-label="Contorno"><svg class="ic"><use href="#block"/></svg></button></div>
<div class="bar"><button aria-label="Borrar"><svg class="ic"><use href="#pencil"/></svg></button><button aria-label="Borrar duplicados"><svg class="ic"><use href="#pencils"/></svg></button><button class="dd" aria-label="Más borrar"></button><i class="sep"></i><button aria-label="Recuperar"><svg class="ic"><use href="#gbrush"/></svg></button><button class="dd off" aria-label="Más recuperar"></button></div>
<div class="bar"><button aria-label="Analizar entidad"><svg class="ic"><use href="#ask"/></svg></button><button aria-label="Comparar"><svg class="ic"><use href="#match"/></svg></button><i class="sep"></i><button aria-label="Unir"><svg class="ic"><use href="#merge"/></svg></button><button aria-label="Verificar"><svg class="ic"><use href="#osq"/></svg></button><button aria-label="Suma"><svg class="ic"><use href="#sigma"/></svg></button><button aria-label="Ejecutar"><svg class="ic"><use href="#cgreen"/></svg></button><button class="dd" aria-label="Más ejecutar"></button></div>
</div>

<div class="row">
<div class="bar"><button aria-label="Punto"><svg class="ic"><use href="#plus"/></svg></button><button class="dd" aria-label="Más punto"></button><button aria-label="Línea"><svg class="ic"><use href="#line"/></svg></button><button class="dd" aria-label="Más línea"></button><button aria-label="Círculo"><svg class="ic"><use href="#circ"/></svg></button><button class="dd" aria-label="Más círculo"></button><button aria-label="Rectángulo"><svg class="ic"><use href="#rect"/></svg></button><button class="dd" aria-label="Más rectángulo"></button><button aria-label="Redondeo"><svg class="ic"><use href="#fillet"/></svg></button><button class="dd" aria-label="Más redondeo"></button><button aria-label="Spline"><svg class="ic"><use href="#spline"/></svg></button><button class="dd" aria-label="Más spline"></button><button aria-label="Cilindro"><svg class="ic"><use href="#cyl"/></svg></button><button class="dd" aria-label="Más primitivas"></button></div>
<div class="bar"><button aria-label="Recortar"><svg class="ic"><use href="#trim"/></svg></button><button aria-label="Romper"><svg class="ic"><use href="#star"/></svg></button><button class="dd" aria-label="Más romper"></button></div>
<div class="bar"><button aria-label="Transformar"><svg class="ic"><use href="#x1"/></svg></button><button aria-label="Trasladar"><svg class="ic"><use href="#x2"/></svg></button><button aria-label="Rotar"><svg class="ic"><use href="#x3"/></svg></button><button aria-label="Simetría"><svg class="ic"><use href="#x4"/></svg></button><button aria-label="Escala"><svg class="ic"><use href="#x5"/></svg></button><button aria-label="Mover al origen"><svg class="ic"><use href="#x6"/></svg></button><button aria-label="Proyectar"><svg class="ic"><use href="#x7"/></svg></button><i class="sep"></i><button aria-label="Paralela"><svg class="ic"><use href="#off"/></svg></button><button class="dd" aria-label="Más paralela"></button><button aria-label="Matriz"><svg class="ic"><use href="#grid4"/></svg></button><button aria-label="Estirar"><svg class="ic"><use href="#stretch"/></svg></button><button class="dd" aria-label="Más estirar"></button></div>
<div class="bar"><button aria-label="Cota"><svg class="ic"><use href="#bulb"/></svg></button><button class="dd" aria-label="Más cota"></button><button aria-label="Nota"><svg class="ic"><use href="#note"/></svg></button></div>
<div class="bar"><button aria-label="Simular"><svg class="ic"><use href="#bx1"/></svg></button><button aria-label="Simular sólido"><svg class="ic"><use href="#bx2"/></svg></button><button aria-label="Backplot"><svg class="ic"><use href="#rnd1"/></svg></button><button aria-label="Post"><svg class="ic"><use href="#rnd2"/></svg></button></div>
<form class="coords">
<label class="key" for="cx"><u>X</u></label><input id="cx" class="combo" value="-137.4691">
<label class="key" for="cy"><u>Y</u></label><input id="cy" class="combo" value="142.53179">
<label class="key" for="cz"><u>Z</u></label><input id="cz" class="combo" value="0.0">
<div class="group"><button type="button" class="flat" aria-label="Punto rápido"><svg class="ic big"><use href="#fast"/></svg></button><button type="button" class="flat" aria-label="Opciones"><svg class="ic big"><use href="#bang"/></svg></button><button type="button" class="flat" aria-label="Origen"><svg class="ic big"><use href="#axes"/></svg></button><button type="button" class="flat dd off" aria-label="Más origen"></button><button type="button" class="face" aria-label="Ayuda"><svg class="ic big"><use href="#help"/></svg></button></div>
</form>
</div>

<div class="ribbon"><span>Ribbon Bar</span></div>

<div class="row selection">
<form class="selbar">
<button type="button" class="face wide">Todo</button><button type="button" class="face wide">Solo</button>
<button type="button" class="flat" aria-label="Sólidos"><svg class="ic big"><use href="#gcubes"/></svg></button>
<select class="mode" aria-label="Modo"><option>Int.</option></select>
<div class="group"><button type="button" class="flat long" aria-label="Verificar selección"><svg class="ic"><use href="#vert"/></svg></button><button type="button" class="face" aria-label="Seleccionar"><svg class="ic big"><use href="#cursor"/></svg></button><button type="button" class="flat" aria-label="Selección sólida"><svg class="ic"><use href="#ghex"/></svg></button></div>
<div class="group"><button type="button" class="flat" aria-label="Arista"><svg class="ic"><use href="#ghex"/></svg></button><button type="button" class="face on" aria-label="Cara"><svg class="ic"><use href="#bcube"/></svg></button><button type="button" class="face hot" aria-label="Cuerpo"><svg class="ic"><use href="#rcube"/></svg></button></div>
<div class="group"><button type="button" class="face" aria-label="Desde atrás"><svg class="ic"><use href="#wcube"/></svg></button><button type="button" class="face" aria-label="Última"><svg class="ic"><use href="#prev"/></svg></button></div>
<div class="group"><button type="button" class="face" aria-label="Validar"><svg class="ic"><use href="#vcheck"/></svg></button></div>
<div class="group red"><button type="button" class="face" aria-label="Cancelar"><svg class="ic"><use href="#stop"/></svg></button><button type="button" class="face" aria-label="Final de selección"><svg class="ic big"><use href="#ok"/></svg></button></div>
<button type="button" class="face" aria-label="Ayuda"><svg class="ic big"><use href="#help"/></svg></button>
</form>
</div>

<main class="work">
<div class="side left">
<button aria-label="Fresadora"><svg class="ic"><use href="#mill"/></svg></button><hr>
<button aria-label="Contorno"><svg class="ic"><use href="#m1"/></svg></button><button aria-label="Cajera"><svg class="ic"><use href="#m2"/></svg></button><button aria-label="Planear"><svg class="ic"><use href="#m3"/></svg></button><button aria-label="Superficie"><svg class="ic"><use href="#m4"/></svg></button><button aria-label="Circular"><svg class="ic"><use href="#m5"/></svg></button><hr>
<button aria-label="Desbaste"><svg class="ic"><use href="#m6"/></svg></button><button aria-label="Acabado"><svg class="ic"><use href="#m7"/></svg></button><button aria-label="Multieje"><svg class="ic"><use href="#m8"/></svg></button>
</div>
<section class="panel">
<header><h2>Gestor Operaciones</h2><button aria-label="Desplegar">▾</button><button class="close" aria-label="Cerrar panel"><svg viewBox="0 0 10 10"><path d="M1 1l8 8M9 1L1 9"/></svg></button></header>
<div class="tabs"><button class="cur">Mecanizados</button><button>Solidos</button></div>
<div class="optools">
<div><button aria-label="Todas"><svg class="ic"><use href="#ck1"/></svg></button><button aria-label="Ninguna"><svg class="ic"><use href="#ck2"/></svg></button><i class="sep"></i><button aria-label="Regenerar"><svg class="ic"><use href="#t1"/></svg></button><button aria-label="Regenerar sucias"><svg class="ic"><use href="#t2"/></svg></button><i class="sep"></i><button aria-label="Backplot"><svg class="ic"><use href="#gsq"/></svg></button><button aria-label="Verificar"><svg class="ic"><use href="#gpoly"/></svg></button><button class="g1">G1</button><button aria-label="Alta velocidad"><svg class="ic"><use href="#tarr"/></svg></button><i class="sep"></i><button aria-label="Borrar todo"><svg class="ic"><use href="#wand"/></svg></button><i class="sep"></i><button aria-label="Ayuda"><svg class="ic"><use href="#ghelp"/></svg></button></div>
<div><button aria-label="Bloquear"><svg class="ic"><use href="#lock"/></svg></button><button aria-label="Mostrar"><svg class="ic"><use href="#waves"/></svg></button><button aria-label="Desactivar"><svg class="ic"><use href="#lock"/></svg></button><i class="sep"></i><button aria-label="Bajar"><svg class="ic"><use href="#dn"/></svg></button><button aria-label="Subir"><svg class="ic"><use href="#up"/></svg></button><button aria-label="Insertar"><svg class="ic"><use href="#loop"/></svg></button><button aria-label="Desplazar"><svg class="ic"><use href="#ud"/></svg></button><i class="sep"></i><button aria-label="Solo seleccionadas"><svg class="ic"><use href="#wavex"/></svg></button><button aria-label="Solo geometría"><svg class="ic"><use href="#shapes"/></svg></button></div>
</div>
<div class="treebox">
<ul class="tree">
<li><svg class="node" viewBox="0 0 34 16"><path d="M.5 4.500h8v8h-8z" fill="#fff" stroke="#999"/><path d="M2.500 8.500h4" stroke="#333"/><path d="M10 8.500h6" stroke="#333" stroke-dasharray="1 1"/><path d="M15.500.500h6v6h-6zM23.500.500h6v6h-6zM15.500 8.500h6v6h-6zM23.500 8.500h6v6h-6z" fill="#4cc8ec" stroke="#123"/></svg><span class="sel">Machine Group-1</span></li>
<li class="sub"><svg class="node" viewBox="0 0 34 16"><path d="M4.500 0v16M9 8.500h6" stroke="#333" stroke-dasharray="1 1"/><path d="M.5 4.500h8v8h-8z" fill="#fff" stroke="#999"/><path d="M2.500 8.500h4M4.500 6.500v4" stroke="#333"/><path d="M16 13h14M19 5v8M23 2v11M27 5v8" stroke="#12128c" stroke-width="2"/></svg><span>Propiedades - GENERIC HAAS 4 - AXIS VMC</span></li>
<li class="sub"><svg class="node" viewBox="0 0 34 16"><path d="M4.500 0v8.500H16" fill="none" stroke="#333" stroke-dasharray="1 1"/><path d="M15.500 1l14 7-14 7z" fill="#f00808"/><path d="M15.500 1l3 2v10l-3 2z" fill="#8c1010"/></svg></li>
</ul>
</div>
</section>

<section class="view">
<svg class="scene" viewBox="404 168 931 574" preserveAspectRatio="xMidYMid slice" role="img" aria-label="Pieza">
<defs>
<linearGradient id="gTop"><stop offset="0" stop-color="#c8c8f8"/><stop offset="1" stop-color="#bcbcec"/></linearGradient>
<linearGradient id="gRim"><stop offset="0" stop-color="#9696b4"/><stop offset=".5" stop-color="#6a6a86"/><stop offset="1" stop-color="#9090b0"/></linearGradient>
<linearGradient id="gPost"><stop offset="0" stop-color="#9292b8"/><stop offset=".12" stop-color="#8c8cb0"/><stop offset=".28" stop-color="#70708e"/><stop offset=".9" stop-color="#6c6c8c"/><stop offset="1" stop-color="#8080a4"/></linearGradient>
</defs>
<g stroke="#7a4048" fill="none"><path d="M771.500 567v175M404 384l334-62M808 309l530-98"/><path d="M713 168l58 148" stroke="#7a4634" stroke-width="1.500"/></g>
<path d="M677 474v29c0 36 42 64 94.500 64S866 539 866 503v-29z" fill="url(#gRim)"/>
<ellipse cx="771.500" cy="474" rx="94.500" ry="64" fill="url(#gTop)"/>
<path d="M735 308v162l7 18q4 8 14 7l45-8q7-2 7-8V318z" fill="url(#gPost)"/>
<path d="M743 303l40-7q14-3 18 5l6 18q3 10-7 13l-40 6q-13 2-17-7l-7-17q-3-8 7-11z" fill="#c6c6f4"/>
<g fill="none" stroke="#704438"><path d="M738 322l33-6M771 316l7 18" stroke-dasharray="2 2"/><path d="M771 316l37-7M778 334l160 408"/><path d="M771 168v148" stroke-width="2"/></g>
<path d="M439 689l5 12" stroke="#668"/><path d="M444 701l19-4" stroke="#702050"/>
<path d="M1215.500 705v23M1311.500 705v26M1215 717.500h96" stroke="#e0e0f4" fill="none"/>
</svg>
<b class="ax ax-y">Y</b><b class="ax ax-x">X</b>
<p class="planes"><span>Vista:No grabado</span><span>WCS:PLANTA</span><span>Plano C/H:PLANTA</span></p>
<p class="scale"><b>45.165</b>Milímetros</p>
</section>

<div class="side right">
<button aria-label="Superficies"><svg class="ic"><use href="#r1"/></svg></button><button aria-label="Ventanas"><svg class="ic"><use href="#r2"/></svg></button><button class="green" aria-label="Planta"><svg class="ic"><use href="#ctop"/></svg></button><button aria-label="Sombreado"><svg class="ic"><use href="#ball"/></svg></button><button aria-label="Nuevo"><svg class="ic"><use href="#new"/></svg></button><button aria-label="Guardar"><svg class="ic"><use href="#save"/></svg></button><button aria-label="Nodos"><svg class="ic"><use href="#r3"/></svg></button><button aria-label="Romper"><svg class="ic"><use href="#star"/></svg></button><button aria-label="Analizar punto"><svg class="ic"><use href="#r4"/></svg></button><button aria-label="Comparar"><svg class="ic"><use href="#match"/></svg></button><hr class="full">
<button aria-label="Todo"><svg class="ic"><use href="#q1"/></svg></button><button aria-label="Puntos"><svg class="ic"><use href="#q2"/></svg></button><button aria-label="Líneas"><svg class="ic"><use href="#q3"/></svg></button><button aria-label="Arcos"><svg class="ic"><use href="#q4"/></svg></button><button aria-label="Splines"><svg class="ic"><use href="#q5"/></svg></button><button aria-label="Mallas"><svg class="ic"><use href="#q6"/></svg></button><button aria-label="Sólidos"><svg class="ic"><use href="#q7"/></svg></button><button aria-label="Superficies alambre"><svg class="ic"><use href="#q8"/></svg></button><button class="gray" aria-label="Limpiar"><svg class="ic"><use href="#stop"/></svg></button><hr>
<button aria-label="Grupo"><svg class="ic"><use href="#s1"/></svg></button><button aria-label="Resultado"><svg class="ic"><use href="#s2"/></svg></button><hr>
<button aria-label="Color"><svg class="ic"><use href="#s3"/></svg></button><button aria-label="Nivel"><svg class="ic"><use href="#s4"/></svg></button><hr>
<button aria-label="Cotas"><svg class="ic"><use href="#s5"/></svg></button>
</div>
</main>

<footer class="status">
<p>Para ayuda, pulsar Alt+H.</p>
<button class="w3d">3D</button><button>Vista</button><button class="wpl">Planos</button>
<div class="pair"><label for="zd">Z</label><div class="zbox"><input id="zd" class="zval" value="0.0"></div></div>
<div class="pair gap2"><button class="color">10</button><button class="more" aria-label="Color">▼</button></div>
<div class="pair gap4"><label for="nv">Nivel</label><select id="nv" class="drop level"><option>1</option></select></div>
<button class="wat">Atributos</button>
<select class="drop pt" aria-label="Punto"><option>✳</option></select>
<select class="drop ln" aria-label="Tipo de línea"><option></option></select>
<select class="drop wd" aria-label="Grosor"><option></option></select>
<button class="wpl">WCS</button><button class="wgr">Grupos</button><button class="tiny">!</button><button class="tiny">?</button>
</footer>

<div class="tip" role="tooltip">Seleccione Solido o Cara</div>
<svg class="marks" aria-hidden="true" fill="none" stroke-linecap="round" stroke-linejoin="round">
<g stroke="#111" stroke-width="4"><path d="M419 122h-9q-5 0-7 4l-7 9M394 129v8l10-1"/></g>
<g stroke="#cc2431" stroke-width="4"><path d="M346 195q11-7 16-21 3 10 12 17M362 176q-3 8-2 26v27l18 1 40 2"/></g>
<g stroke="#b0d850" stroke-width="4"><path d="M515 186q7-4 10-12 4 5 12 9M525 176v22l27 0 36 1"/></g>
<g stroke="#bc7c70" stroke-width="4"><path d="M855 259l-13 4-14 2-35 37-8 15"/><path d="M782 306l1 12 13-4" stroke="#c8844c"/></g>
</svg>
<p class="hint h1">desactivan selec. cuerpo</p>
<p class="hint h2">ésta la dejan como está</p>
<p class="hint h3">final de selección</p>
<p class="hint h4">casra que seleccionaremos</p>
</body>
</html>
```
FILE: styles.css
```css
* { box-sizing: border-box; }

body {
  margin: 0;
  height: 100vh;
  display: flex;
  flex-direction: column;
  overflow: hidden;
  position: relative;
  background: #fff;
  color: #111;
  font: 11px "Liberation Sans", sans-serif;
}

button, input, select { font: inherit; color: inherit; margin: 0; padding: 0; border: 0; background: none; border-radius: 0; }
button { display: flex; align-items: center; justify-content: center; white-space: nowrap; }
h1, h2, p, ul { margin: 0; padding: 0; font-size: inherit; font-weight: normal; }
ul { list-style: none; }

.sprite { position: absolute; width: 0; height: 0; }
.ic { width: 17px; height: 17px; flex: none; display: block; }
.ic.big { width: 20px; height: 20px; }

.titlebar { flex: none; height: 23px; display: flex; align-items: center; gap: 4px; padding-left: 2px; font: 12px Roboto, sans-serif; }
.titlebar h1 { flex: 1; }
.winbtns { display: flex; }
.winbtns button { width: 46px; height: 22px; }
.winbtns svg { width: 12px; height: 12px; fill: none; stroke: #111; }

.menubar { flex: none; height: 20px; display: flex; padding-left: 1px; font: 12px "Open Sans", sans-serif; }
.menubar button { padding: 0 6px; }

.row { flex: none; height: 30px; display: flex; border-top: 1px solid #a0a0a0; }
.bar { display: flex; align-items: center; padding: 0 3px 0 11px; border-right: 1px solid #909090; background: radial-gradient(#bbb 1px, transparent 1px) 2px 5px / 5px 6px repeat-y, #f1f1f1; }
.bar button { width: 23px; height: 26px; }
.bar.apart { margin-left: 8px; border-left: 1px solid #909090; padding-left: 10px; }
.bar .dd { width: 15px; }
.dd::after { content: ""; border: 4px solid transparent; border-top: 5px solid #222; border-bottom: 0; }
.dd.off::after { border-top-color: #888; }
.sep { width: 8px; height: 18px; background: linear-gradient(#888, #888) 2px 0 / 1px 100% no-repeat; }
.green { color: #4c7c14; }
.clear { --f: #fff; }

.coords { display: flex; align-items: center; padding: 0 8px 0 7px; gap: 5px; background: #ffffce; border-right: 1px solid #a0a0a0; }
.key { width: 21px; height: 21px; display: grid; place-items: center; background: #cbcbcb; font-size: 13px; }
.combo { width: 72px; height: 21px; border: 1px solid #ccc; padding: 0 19px 0 2px; font-size: 11px; background: url("data:image/svg+xml,%3Csvg xmlns='http://www.w3.org/2000/svg' width='9' height='6'%3E%3Cpath d='M1 1l3.500 4L8 1' fill='none' stroke='%23aaa'/%3E%3C/svg%3E") right 4px center no-repeat, linear-gradient(#f0f0f0, #f0f0f0) 2px 2px / 50px 15px no-repeat, #fff; }
.combo + .key { margin-left: 8px; }
.coords .group { margin-left: 2px; }
.group { display: flex; gap: 2px; }
.face, .flat { width: 22px; height: 22px; }
.face { background: #dcdcdc; border: 1px solid #adadad; }
.flat { background: #f0f0ec; }
.flat.dd { width: 13px; }
.flat.dd::after { border-width: 4px 3px 0; }

.ribbon { flex: none; height: 32px; background: #f0f0f0; border-top: 1px solid #a0a0a0; padding: 11px 187px 0; font-size: 11px; }

.selection { height: 33px; border-bottom: 1px solid #a0a080; }
.selbar { display: flex; align-items: center; gap: 8px; margin-left: 4px; padding: 0 8px; background: #ffffce; border: solid #a0a0a0; border-width: 0 1px; }
.wide { width: 45px; margin-right: 2px; font-size: 12px; }
.long { width: 36px; }
.long .ic { width: 34px; }
.mode { width: 72px; height: 21px; padding-left: 2px; border: 1px solid #bbb; appearance: none; background: url("data:image/svg+xml,%3Csvg xmlns='http://www.w3.org/2000/svg' width='9' height='6'%3E%3Cpath d='M1 1l3.500 4L8 1' fill='none' stroke='%23999'/%3E%3C/svg%3E") right 4px center no-repeat, linear-gradient(#f2f2f2, #f2f2f2) 2px 2px / 48px 15px no-repeat, #ccc; }
.face.on { background: #7cbcf4; border-color: #2878c8; }
.face.hot { background: #d8ecfc; border-color: #2878c8; }
.red { color: #c0341c; }

.work { flex: 1; min-height: 0; display: flex; }
.side { flex: none; width: 28px; display: flex; flex-direction: column; align-items: center; background: #f0f0f0; }
.side button { width: 22px; height: 22px; flex: none; }
.side hr { width: 19px; height: 1px; flex: none; margin: 3px 0 4px; border: 0; background: #999; }
.side .full { width: 100%; margin: 3px 0 10px; }
.left { align-self: flex-start; padding: 10px 0 3px; border-bottom: 1px solid #999; }
.right { width: 31px; padding-top: 10px; overflow: hidden; border-left: 2px solid #fff; }
.gray { color: #999; }

.panel { flex: none; width: 376px; display: flex; flex-direction: column; background: #f0f0f0; border: solid #fff; border-width: 0 2px 0 1px; }
.panel header { height: 18px; display: flex; align-items: flex-start; gap: 4px; padding: 1px 6px 0 5px; background: #b1b1b1; font-size: 11px; }
.panel h2 { flex: 1; line-height: 14px; }
.panel header button { width: 20px; height: 19px; background: #ececec; border: 1px solid #ccc; }
.panel header svg { width: 9px; height: 9px; stroke: #111; }
.tabs { display: flex; align-items: flex-end; height: 21px; padding-left: 1px; font: 11px Roboto, sans-serif; }
.tabs button { height: 18px; padding: 0 4px; border: 1px solid #ddd; }
.tabs .cur { height: 21px; padding: 0 6px; margin-right: 2px; background: #fff; border-color: #fff; }
.optools { padding: 2px 0 0 3px; }
.optools > div { display: flex; align-items: center; height: 31px; width: 279px; padding-left: 5px; border-top: 1px solid #a8a8a8; }
.optools button { width: 23px; height: 22px; }
.optools .sep { width: 6px; }
.optools .g1 { font: bold 13px "Liberation Serif", serif; color: #999; }
.treebox { flex: 1; margin: 6px 5px 5px; border: 1px solid #828790; background: #fff; }
.tree { padding: 1px 0 0 8px; font: 11px Roboto, sans-serif; }
.tree li { display: flex; align-items: center; height: 16px; }
.tree .sub { padding-left: 19px; }
.node { width: 34px; height: 16px; flex: none; }
.sel { background: #3399f0; color: #fff; padding: 0 2px; line-height: 16px; }

.view { flex: 1; min-width: 0; position: relative; overflow: hidden; background: #000096; }
.scene { display: block; width: 100%; height: 100%; }
.ax { position: absolute; font: bold 11px "Open Sans", sans-serif; }
.ax-y { left: 28px; bottom: 53px; color: #208080; }
.ax-x { left: 65px; bottom: 39px; color: #901838; }
.planes, .scale { position: absolute; bottom: 8px; font: bold 11px/16px "Open Sans", sans-serif; }
.planes { left: 7px; display: flex; gap: 10px; color: #b8ccff; }
.scale { right: 36px; color: #c0c0f4; }
.scale b { display: block; color: #28d868; }

.status { flex: none; height: 26px; display: flex; gap: 5px; margin-right: -4px; padding: 4px 0 0 2px; overflow: hidden; background: #f0f0f0; border-bottom: 2px solid #222; font: 12px "Open Sans", sans-serif; }
.status > * { flex: none; }
.status > p { flex: 1; line-height: 20px; font: 12px/21px Roboto, sans-serif; }
.status button { height: 20px; width: 28px; background: #cfcfcf; font-size: 11px; }
.status .w3d { width: 23px; }
.status .wpl { width: 39px; }
.status .wat { width: 52px; }
.status .wgr { width: 42px; }
.status .tiny { width: 12px; }
.status .pair { display: flex; line-height: 18px; }
.status .gap2 { gap: 2px; }
.status .gap4 { gap: 4px; }
.status .pair label { font-size: 11px; padding: 0 2px; background: #f8f8f8; }
.zbox { width: 83px; border: 1px solid #888; background: url("data:image/svg+xml,%3Csvg xmlns='http://www.w3.org/2000/svg' width='9' height='6'%3E%3Cpath d='M1 1l3.500 4L8 1' fill='none' stroke='%23444'/%3E%3C/svg%3E") right 4px center no-repeat, #fff; }
.zval { display: block; width: 62px; height: 18px; padding-left: 3px; color: #fff; background: linear-gradient(#3d8fd8, #3d8fd8) 3px 2px / 16px 14px no-repeat, #ffff80; font-size: 11px; }
.status .color { width: 32px; background: #0f0; color: #063; }
.status .more { width: 14px; font-size: 14px; }
.drop { height: 20px; border: 1px solid #888; appearance: none; padding-left: 4px; background: url("data:image/svg+xml,%3Csvg xmlns='http://www.w3.org/2000/svg' width='9' height='6'%3E%3Cpath d='M1 1l3.500 4L8 1' fill='none' stroke='%23444'/%3E%3C/svg%3E") right 4px center no-repeat, #fff; }
.level { width: 101px; }
.pt { width: 36px; padding-left: 1px; }
.ln, .wd { width: 62px; background: url("data:image/svg+xml,%3Csvg xmlns='http://www.w3.org/2000/svg' width='9' height='6'%3E%3Cpath d='M1 1l3.500 4L8 1' fill='none' stroke='%23444'/%3E%3C/svg%3E") right 4px center no-repeat, linear-gradient(#000, #000) 2px center / 40px 3px no-repeat, #fff; }
.wd { width: 68px; background-size: auto, 46px 1px; }

.tip { position: absolute; left: 356px; top: 187px; padding: 0 3px; line-height: 15px; font-size: 11px; background: #ffffe1; border: 1px solid #333; }
.marks { position: absolute; left: 0; top: 0; width: 100%; height: 100%; pointer-events: none; }
.hint { position: absolute; font: bold 14px/18px Lato, sans-serif; white-space: nowrap; }
.h1 { left: 431px; top: 115px; }
.h2 { left: 436px; top: 224px; color: #c42454; }
.h3 { left: 604px; top: 187px; color: #a4dc78; }
.h4 { left: 879px; top: 246px; width: 110px; white-space: normal; color: #a87890; }
```
